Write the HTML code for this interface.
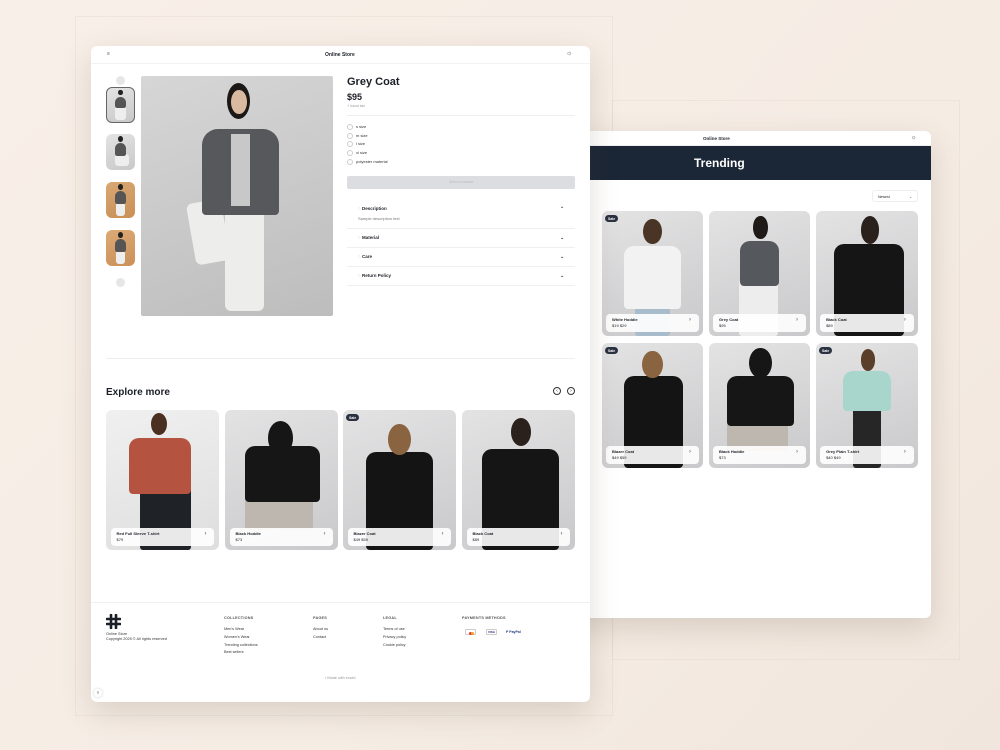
<!DOCTYPE html>
<html><head><meta charset="utf-8">
<style>
*{box-sizing:border-box;margin:0;padding:0}
body{width:1000px;height:750px;overflow:hidden;background:linear-gradient(135deg,#f8efe8 0%,#f5ece4 60%,#f1e6dd 100%);font-family:"Liberation Sans",sans-serif;position:relative;color:#1b1f26}
.a{position:absolute}
.page{position:absolute;background:#fff;border-radius:6px;box-shadow:0 10px 30px rgba(90,70,50,.18);overflow:hidden}
.card{position:absolute;border-radius:6px;overflow:hidden;background:linear-gradient(160deg,#e3e3e4,#c9c9cb)}
.card .h{position:absolute;border-radius:50%}
.card .t{position:absolute;border-radius:10px 10px 4px 4px}
.card .l{position:absolute;border-radius:3px}
.pill{position:absolute;left:4%;right:4%;bottom:4px;height:18px;background:rgba(255,255,255,.9);border-radius:4px;font-size:4px;padding:3px 6px;line-height:5.5px;font-weight:bold}
.pill span{font-weight:normal;display:block}
.pill:after{content:"›";position:absolute;right:8px;top:4px;font-size:6px;color:#777}
.sale{position:absolute;left:3px;top:4px;background:#2a3140;color:#fff;font-size:3.5px;padding:1.5px 3px;border-radius:4px;font-weight:bold}
.txt{position:absolute;font-size:4px;color:#444}
.acc{position:absolute;left:347px;width:228px;border-bottom:1px solid #eeeff1;font-size:4.5px;font-weight:bold}
.rad{position:absolute;left:347px;font-size:4px;color:#333}
.rad:before{content:"";display:inline-block;width:4px;height:4px;border:0.6px solid #ccc;border-radius:50%;margin-right:3px;vertical-align:middle}
.fh{position:absolute;font-size:3.8px;font-weight:bold;color:#555;letter-spacing:.2px}
.fl{position:absolute;font-size:3.8px;color:#333}
</style></head><body>
<div class="a" style="left:75px;top:16px;width:538px;height:700px;border:1px solid rgba(225,210,200,.35)"></div>
<div class="a" style="left:612px;top:100px;width:348px;height:560px;border:1px solid rgba(225,210,200,.35)"></div>

<div class="page" style="left:560px;top:131px;width:371px;height:487px">
  <div class="a" style="left:0;top:0;width:371px;height:15px;border-bottom:1px solid #f0f0f0"></div>
  <div class="a" style="left:143px;top:5px;font-size:4.5px;font-weight:bold">Online Store</div>
  <div class="a" style="left:351px;top:4px;font-size:6px;color:#444">☼</div>
  <div class="a" style="left:0;top:15px;width:371px;height:34px;background:#1b2636"></div>
  <div class="a" style="left:134px;top:25px;font-size:12px;font-weight:bold;color:#fff">Trending</div>
  <div class="a" style="left:312px;top:59px;width:46px;height:12px;border:1px solid #eee;border-radius:3px;font-size:3.5px;padding:4px 5px">Newest<span style="float:right">⌄</span></div>
</div>
<div class="card" style="left:602px;top:211px;width:101px;height:125px"><div class="l" style="left:33%;top:65%;width:34%;height:35%;background:#a9bccb"></div><div class="t" style="left:22%;top:28%;width:56%;height:50%;background:#f2f2f2"></div><div class="h" style="left:41%;top:6%;width:18%;height:20%;background:#4a3426"></div><div class="sale">Sale</div><div class="pill">White Hoddie<span>$19 $29</span></div></div>
<div class="card" style="left:709px;top:211px;width:101px;height:125px"><div class="l" style="left:30%;top:55%;width:38%;height:45%;background:#ededed"></div><div class="t" style="left:31%;top:24%;width:38%;height:36%;background:#55585c"></div><div class="h" style="left:44%;top:4%;width:14%;height:18%;background:#1e1a18"></div><div class="pill">Grey Coat<span>$95</span></div></div>
<div class="card" style="left:816px;top:211px;width:102px;height:125px"><div class="t" style="left:18%;top:26%;width:68%;height:74%;background:#151515"></div><div class="h" style="left:44%;top:4%;width:18%;height:22%;background:#2a211d"></div><div class="pill">Black Coat<span>$89</span></div></div>
<div class="card" style="left:602px;top:343px;width:101px;height:125px"><div class="t" style="left:22%;top:26%;width:58%;height:74%;background:#141414"></div><div class="h" style="left:40%;top:6%;width:20%;height:22%;background:#8a6440"></div><div class="sale">Sale</div><div class="pill">Blazer Coat<span>$49 $59</span></div></div>
<div class="card" style="left:709px;top:343px;width:101px;height:125px"><div class="l" style="left:18%;top:60%;width:60%;height:26%;background:#bdb7b0"></div><div class="t" style="left:18%;top:26%;width:66%;height:40%;background:#161616"></div><div class="h" style="left:40%;top:4%;width:22%;height:24%;background:#161616"></div><div class="pill">Black Hoddie<span>$73</span></div></div>
<div class="card" style="left:816px;top:343px;width:102px;height:125px"><div class="l" style="left:36%;top:50%;width:28%;height:50%;background:#262626"></div><div class="t" style="left:26%;top:22%;width:48%;height:32%;background:#a8d6cc"></div><div class="h" style="left:44%;top:5%;width:14%;height:17%;background:#5b3e2a"></div><div class="sale">Sale</div><div class="pill">Grey Plain T-shirt<span>$40 $49</span></div></div>

<div class="page" style="left:91px;top:46px;width:499px;height:656px">
  <div class="a" style="left:0;top:0;width:499px;height:18px;border-bottom:1px solid #f2f2f2"></div>
  <div class="a" style="left:16px;top:5px;font-size:5px;color:#555">≡</div>
  <div class="a" style="left:234px;top:6px;font-size:5px;font-weight:bold">Online Store</div>
  <div class="a" style="left:475px;top:4px;font-size:7px;color:#444">☼</div>
</div>
<div class="a" style="left:116px;top:76px;width:9px;height:9px;border-radius:50%;background:#e6e6e6"></div>
<div class="a" style="left:116px;top:278px;width:9px;height:9px;border-radius:50%;background:#e6e6e6"></div>
<div class="card" style="left:106px;top:87px;width:29px;height:36px;border:1px solid #666"><div class="l" style="left:30%;top:50%;width:40%;height:45%;background:#eee"></div><div class="t" style="left:30%;top:25%;width:40%;height:35%;background:#555"></div><div class="h" style="left:42%;top:6%;width:16%;height:16%;background:#222"></div></div>
<div class="card" style="left:106px;top:134px;width:29px;height:36px"><div class="l" style="left:30%;top:55%;width:50%;height:35%;background:#eee"></div><div class="t" style="left:30%;top:25%;width:40%;height:35%;background:#555"></div><div class="h" style="left:42%;top:6%;width:16%;height:16%;background:#222"></div></div>
<div class="card" style="left:106px;top:182px;width:29px;height:36px;background:linear-gradient(160deg,#d9a874,#c98f56)"><div class="l" style="left:35%;top:55%;width:30%;height:40%;background:#eee"></div><div class="t" style="left:30%;top:25%;width:40%;height:35%;background:#555"></div><div class="h" style="left:42%;top:6%;width:16%;height:16%;background:#222"></div></div>
<div class="card" style="left:106px;top:230px;width:29px;height:36px;background:linear-gradient(160deg,#dcaa76,#cb9058)"><div class="l" style="left:35%;top:55%;width:30%;height:40%;background:#eee"></div><div class="t" style="left:30%;top:25%;width:40%;height:35%;background:#555"></div><div class="h" style="left:42%;top:6%;width:16%;height:16%;background:#222"></div></div>
<div class="card" style="left:141px;top:76px;width:192px;height:240px;border-radius:2px;background:linear-gradient(160deg,#d6d6d6,#bdbdbd)">
  <div class="l" style="left:26%;top:52%;width:18%;height:26%;background:#ededeb;border-radius:6px;transform:rotate(-10deg)"></div>
  <div class="l" style="left:44%;top:52%;width:20%;height:46%;background:#ededeb;border-radius:6px"></div>
  <div class="t" style="left:32%;top:22%;width:40%;height:36%;background:#56585b;border-radius:16px 16px 4px 4px"></div>
  <div class="a" style="left:47%;top:24%;width:10%;height:30%;background:#c8c8c8"></div>
  <div class="h" style="left:45%;top:3%;width:12%;height:15%;background:#1c1816"></div>
  <div class="h" style="left:47%;top:6%;width:8%;height:10%;background:#d9b9a0"></div>
</div>
<div class="a" style="left:347px;top:76px;font-size:11px;font-weight:bold">Grey Coat</div>
<div class="a" style="left:347px;top:92px;font-size:9px;font-weight:bold">$95</div>
<div class="txt" style="left:347px;top:103px;color:#999">+ local tax</div>
<div class="a" style="left:347px;top:115px;width:228px;height:1px;background:#eee"></div>
<div class="rad" style="top:124px">s size</div>
<div class="rad" style="top:133px">m size</div>
<div class="rad" style="top:141px">l size</div>
<div class="rad" style="top:150px">xl size</div>
<div class="rad" style="top:159px">polyester material</div>
<div class="a" style="left:347px;top:176px;width:228px;height:13px;background:#dcdde0;border-radius:2px;font-size:3.5px;color:#bbb;text-align:center;line-height:13px">Select a variant</div>
<div class="acc" style="top:202px;height:27px;padding:4px 11px"><span style="color:#ccc">○</span> Description<span style="float:right">⌃</span><div style="font-weight:normal;color:#777;margin-top:5px;font-size:4px">Sample description text</div></div>
<div class="acc" style="top:231px;height:17px;padding:4px 11px"><span style="color:#ccc">○</span> Material<span style="float:right">⌄</span></div>
<div class="acc" style="top:250px;height:17px;padding:4px 11px"><span style="color:#ccc">○</span> Care<span style="float:right">⌄</span></div>
<div class="acc" style="top:269px;height:17px;padding:4px 11px"><span style="color:#ccc">○</span> Return Policy<span style="float:right">⌄</span></div>
<div class="a" style="left:106px;top:358px;width:469px;height:1px;background:#eee"></div>
<div class="a" style="left:106px;top:387px;font-size:10px;font-weight:bold">Explore more</div>
<div class="a" style="left:553px;top:387px;width:8px;height:8px;border:1px solid #333;border-radius:50%;font-size:5px;line-height:6px;text-align:center">‹</div>
<div class="a" style="left:567px;top:387px;width:8px;height:8px;border:1px solid #333;border-radius:50%;font-size:5px;line-height:6px;text-align:center">›</div>
<div class="card" style="left:106px;top:410px;width:113px;height:140px;background:linear-gradient(160deg,#f0f0f0,#dedede)"><div class="l" style="left:30%;top:55%;width:45%;height:45%;background:#1f2328"></div><div class="t" style="left:20%;top:20%;width:55%;height:40%;background:#b4533f"></div><div class="h" style="left:40%;top:2%;width:14%;height:16%;background:#4b3022"></div><div class="pill">Red Full Sleeve T-shirt<span>$79</span></div></div>
<div class="card" style="left:225px;top:410px;width:113px;height:140px"><div class="l" style="left:18%;top:60%;width:60%;height:26%;background:#bdb7b0"></div><div class="t" style="left:18%;top:26%;width:66%;height:40%;background:#161616"></div><div class="h" style="left:38%;top:8%;width:22%;height:24%;background:#161616"></div><div class="pill">Black Hoddie<span>$73</span></div></div>
<div class="card" style="left:343px;top:410px;width:113px;height:140px"><div class="t" style="left:20%;top:30%;width:60%;height:70%;background:#141414"></div><div class="h" style="left:40%;top:10%;width:20%;height:22%;background:#8a6440"></div><div class="sale">Sale</div><div class="pill">Blazer Coat<span>$49 $59</span></div></div>
<div class="card" style="left:462px;top:410px;width:113px;height:140px"><div class="t" style="left:18%;top:28%;width:68%;height:72%;background:#151515"></div><div class="h" style="left:43%;top:6%;width:18%;height:20%;background:#2a211d"></div><div class="pill">Black Coat<span>$89</span></div></div>

<div class="a" style="left:91px;top:602px;width:499px;height:1px;background:#f0f0f0"></div>
<svg class="a" style="left:106px;top:614px" width="15" height="15" viewBox="0 0 15 15"><path d="M5 1v13M10 1v13M1 5h13M1 10h13" stroke="#1b1f26" stroke-width="2.6" stroke-linecap="round"/></svg>
<div class="fl" style="left:106px;top:632px">Online Store</div>
<div class="fl" style="left:106px;top:637px">Copyright 2025 © All rights reserved</div>
<div class="fh" style="left:224px;top:616px">COLLECTIONS</div>
<div class="fl" style="left:224px;top:627px">Men's Wear</div>
<div class="fl" style="left:224px;top:635px">Women's Wear</div>
<div class="fl" style="left:224px;top:643px">Trending collections</div>
<div class="fl" style="left:224px;top:650px">Best sellers</div>
<div class="fh" style="left:313px;top:616px">PAGES</div>
<div class="fl" style="left:313px;top:627px">About us</div>
<div class="fl" style="left:313px;top:635px">Contact</div>
<div class="fh" style="left:383px;top:616px">LEGAL</div>
<div class="fl" style="left:383px;top:627px">Terms of use</div>
<div class="fl" style="left:383px;top:635px">Privacy policy</div>
<div class="fl" style="left:383px;top:643px">Cookie policy</div>
<div class="fh" style="left:462px;top:616px">PAYMENTS METHODS</div>
<div class="a" style="left:465px;top:629px;width:11px;height:6px;border:0.6px solid #ccc;border-radius:1px"><div class="a" style="left:3px;top:1.5px;width:3px;height:3px;border-radius:50%;background:#e33"></div><div class="a" style="left:5px;top:1.5px;width:3px;height:3px;border-radius:50%;background:#f9a01b"></div></div>
<div class="a" style="left:486px;top:629px;width:11px;height:6px;border:0.6px solid #ccc;border-radius:1px;font-size:3px;text-align:center;line-height:5px;color:#1a1f71;font-weight:bold">VISA</div>
<div class="a" style="left:506px;top:630px;font-size:3.5px;color:#253b80;font-weight:bold">P PayPal</div>
<div class="fl" style="left:325px;top:676px;color:#999">⬩ Made with ecwid</div>
<div class="a" style="left:94px;top:689px;width:8px;height:8px;border-radius:50%;background:#fff;box-shadow:0 0 3px rgba(0,0,0,.2);font-size:4px;text-align:center;line-height:8px;color:#777">⚲</div>
</body></html>
